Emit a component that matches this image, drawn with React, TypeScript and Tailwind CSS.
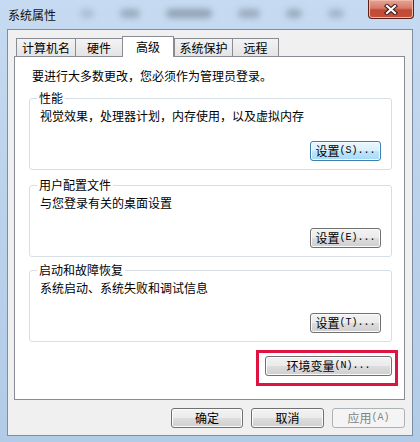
import React from "react";

type BtnKind = "normal" | "focus" | "disabled";

interface BtnProps {
  label: string;
  keyHint: string;
  width: string;
  kind?: BtnKind;
}

const btnClass: Record<BtnKind, string> = {
  normal:
    "border-[#707070] bg-[linear-gradient(to_bottom,#f2f2f2_0%,#ebebeb_50%,#dddddd_50%,#cfcfcf_100%)] text-black shadow-[inset_0_0_0_1px_#fbfbfb]",
  focus:
    "border-[#3c7fb1] bg-[linear-gradient(to_bottom,#eaf6fd_0%,#d9f0fc_50%,#bee6fd_50%,#a7d9f5_100%)] text-black shadow-[inset_0_0_0_1px_#f4fbff]",
  disabled: "border-[#adb2b5] bg-[#f4f4f4] text-[#838383]",
};

const WinButton: React.FC<BtnProps> = ({ label, keyHint, width, kind = "normal" }) => (
  <div
    className={`flex h-[20px] items-center justify-center rounded-[3px] border ${width} ${btnClass[kind]}`}
  >
    <span className="text-[12px] leading-[16px]">{label}</span>
    <span className="font-['Liberation_Mono',monospace] text-[10px] leading-[16px]">{keyHint}</span>
  </div>
);

interface GroupProps {
  title: string;
  text: string;
  button: React.ReactNode;
  className: string;
}

// group box with the caption sitting on the top border
const GroupBox: React.FC<GroupProps> = ({ title, text, button, className }) => (
  <div
    className={`ml-[14px] flex w-[363px] flex-col rounded-[3px] border border-[#d5dfe5] pb-[8px] ${className}`}
  >
    <span className="-mt-[9px] ml-[7px] w-fit bg-white px-[2px] leading-[16px]">{title}</span>
    <p className="mt-[2px] pl-[10px] leading-[16px]">{text}</p>
    <div className="mt-[17px] flex justify-end pr-[10px]">{button}</div>
  </div>
);

const tabs = [
  { name: "计算机名", w: "w-[60px]", extra: "" },
  { name: "硬件", w: "w-[48px]", extra: "-ml-px" },
  { name: "高级", w: "w-[52px]", extra: "-ml-px", active: true },
  { name: "系统保护", w: "w-[59px]", extra: "" },
  { name: "远程", w: "w-[47px]", extra: "-ml-px" },
];

const blobs = ["w-[14px] opacity-30", "w-[20px] opacity-50", "w-[46px] opacity-60", "w-[22px] opacity-50", "w-[16px] opacity-50", "w-[16px] opacity-40"];

export default function App() {
  return (
    <div className="flex h-[442px] w-[420px] flex-col bg-[linear-gradient(to_bottom,#c6dbf1,#bcd3ec_40%,#b2cbe7)] font-['Noto_Sans_CJK_SC','Noto_Sans',sans-serif] text-[12px] text-black">
      {/* title bar */}
      <div className="flex h-[29px] items-start">
        <span className="pl-[8px] pt-[7px] leading-[16px] text-[#111]">系统属性</span>
        <div className="flex flex-1 items-center gap-[26px] pl-[24px] pt-[9px]">
          {blobs.map((b, i) => (
            <span key={i} className={`h-[9px] rounded-full bg-[#6d7c8c] blur-[3px] ${b}`} />
          ))}
        </div>
        <div className="mr-[6px] flex h-[19px] w-[46px] items-center justify-center rounded-b-[4px] border border-t-0 border-[#5b2118] bg-[linear-gradient(to_bottom,#e6a596_0%,#d67a68_45%,#c44a36_55%,#c0503c_100%)] shadow-[inset_0_0_0_1px_#f0b8a8]">
          <svg width="14" height="11" viewBox="0 0 14 11">
            <path d="M3 2L11 9M11 2L3 9" stroke="#3a1a16" strokeWidth="4.2" strokeLinecap="square" />
            <path d="M3 2L11 9M11 2L3 9" stroke="#ffffff" strokeWidth="2.2" strokeLinecap="square" />
          </svg>
        </div>
      </div>

      {/* dialog body */}
      <div className="ml-[7px] flex h-[407px] w-[406px] flex-col border border-[#7c8ea3] bg-[#f0f0f0]">
        <div className="flex h-[26px] items-end pl-[8px] pt-[6px]">
          {tabs.map((t) =>
            t.active ? (
              <div
                key={t.name}
                className={`relative z-10 -mb-px flex h-[21px] items-start justify-center border border-b-0 border-[#898c95] bg-white pt-[2px] leading-[16px] ${t.w} ${t.extra}`}
              >
                {t.name}
              </div>
            ) : (
              <div
                key={t.name}
                className={`flex h-[18px] items-center justify-center border border-b-0 border-[#898c95] bg-[linear-gradient(to_bottom,#f3f3f3,#e4e4e4)] leading-[16px] ${t.w} ${t.extra}`}
              >
                {t.name}
              </div>
            ),
          )}
        </div>

        <div className="ml-[6px] flex h-[344px] w-[391px] flex-col border border-[#898c95] bg-white">
          <p className="pl-[17px] pt-[11px] leading-[16px]">要进行大多数更改，您必须作为管理员登录。</p>

          <GroupBox
            className="mt-[14px]"
            title="性能"
            text="视觉效果，处理器计划，内存使用，以及虚拟内存"
            button={<WinButton label="设置" keyHint="(S)..." width="w-[71px] h-[19px]" kind="focus" />}
          />
          <GroupBox
            className="mt-[15px]"
            title="用户配置文件"
            text="与您登录有关的桌面设置"
            button={<WinButton label="设置" keyHint="(E)..." width="w-[71px] h-[19px]" />}
          />
          <GroupBox
            className="mt-[13px]"
            title="启动和故障恢复"
            text="系统启动、系统失败和调试信息"
            button={<WinButton label="设置" keyHint="(T)..." width="w-[71px] h-[19px]" />}
          />

          <div className="mt-[14px] flex justify-end pr-[12px]">
            <div className="relative">
              <WinButton label="环境变量" keyHint="(N)..." width="w-[127px]" />
              {/* red annotation frame */}
              <div className="pointer-events-none absolute -bottom-[10px] -left-[9px] -right-[6px] -top-[6px] border-[3px] border-[#e0123f]" />
            </div>
          </div>
        </div>

        <div className="mt-[8px] flex justify-end gap-[8px] pr-[7px]">
          <WinButton label="确定" keyHint="" width="w-[72px]" />
          <WinButton label="取消" keyHint="" width="w-[73px]" />
          <WinButton label="应用" keyHint="(A)" width="w-[73px]" kind="disabled" />
        </div>
      </div>
    </div>
  );
}
